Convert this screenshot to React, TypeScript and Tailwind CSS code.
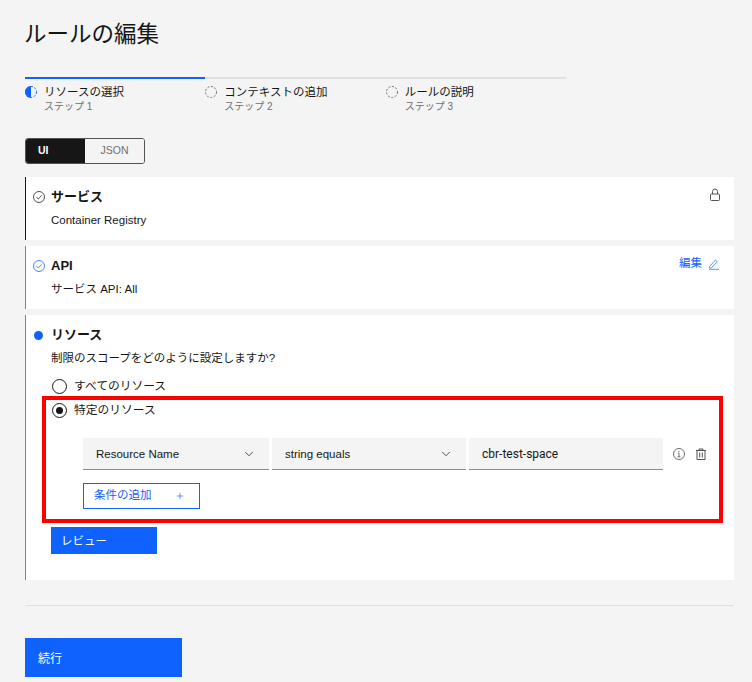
import { ChevronDown, Plus } from "lucide-react";

const FONT = "font-['Liberation_Sans','Noto_Sans_CJK_JP',sans-serif]";

const steps = [
  { label: "リソースの選択", sub: "ステップ 1", active: true },
  { label: "コンテキストの追加", sub: "ステップ 2", active: false },
  { label: "ルールの説明", sub: "ステップ 3", active: false },
];

function StepIcon({ active }: { active: boolean }) {
  if (active) {
    return (
      <svg width="14" height="14" viewBox="0 0 14 14" className="-ml-[1px] shrink-0">
        <path d="M7 1a6 6 0 0 0 0 12z" fill="#0f62fe" />
        <circle cx="7" cy="7" r="5.5" fill="none" stroke="#0f62fe" strokeWidth="1" strokeDasharray="2 1.6" />
      </svg>
    );
  }
  return (
    <svg width="14" height="14" viewBox="0 0 14 14" className="-ml-[1px] shrink-0">
      <circle cx="7" cy="7" r="5.5" fill="none" stroke="#6f6f6f" strokeWidth="1" strokeDasharray="2 1.6" />
    </svg>
  );
}

function CheckCircle({ color }: { color: string }) {
  return (
    <svg width="14" height="14" viewBox="0 0 14 14" className="shrink-0">
      <circle cx="7" cy="7" r="5.5" fill="none" stroke={color} strokeWidth="1" />
      <path d="M4.4 7.2l1.9 1.8 3.3-3.6" fill="none" stroke={color} strokeWidth="1" />
    </svg>
  );
}

function Radio({ checked }: { checked?: boolean }) {
  return (
    <span className="flex h-[15px] w-[15px] shrink-0 items-center justify-center rounded-full border border-[#161616]">
      {checked && <span className="h-[7px] w-[7px] rounded-full bg-[#161616]" />}
    </span>
  );
}

function SelectBox({ label, width }: { label: string; width: string }) {
  return (
    <div className={`flex h-[32px] items-center justify-between border-b border-[#8d8d8d] bg-[#f4f4f4] pl-[13px] pr-[13px] text-[11.5px] text-[#161616] ${width}`}>
      <span className="pt-[2px]">{label}</span>
      <ChevronDown size={14} strokeWidth={1.25} />
    </div>
  );
}

export default function App() {
  return (
    <div className={`${FONT} h-[682px] w-[752px] overflow-hidden bg-[#f4f4f4] text-[#161616]`}>
      <div className="pl-[25px] pr-[18px]">
        <h1 className="-ml-[1px] pt-[20px] text-[22.5px] font-normal leading-[30px]">ルールの編集</h1>

        {/* STEPS */}
        <div className="mt-[27px] flex w-[541px]">
          {steps.map((s) => (
            <div key={s.label} className={`w-1/3 border-t-2 pt-[6px] ${s.active ? "border-[#0f62fe]" : "border-[#e0e0e0]"}`}>
              <div className="flex gap-[6px]">
                <StepIcon active={s.active} />
                <div>
                  <div className="text-[11.5px] leading-[14px]">{s.label}</div>
                  <div className="mt-[1px] text-[10px] leading-[14px] text-[#6f6f6f]">{s.sub}</div>
                </div>
              </div>
            </div>
          ))}
        </div>

        {/* UI / JSON */}
        <div className="mt-[24px] flex h-[26px] w-[120px] overflow-hidden rounded-[3px] border border-[#525252] text-[10.5px]">
          <div className="flex w-[59px] items-center bg-[#161616] pl-[12px] font-semibold text-white">UI</div>
          <div className="flex flex-1 items-center justify-center bg-[#f4f4f4] text-[#6f6f6f]">JSON</div>
        </div>

        {/* SERVICE */}
        <section className="mt-[13px] flex h-[63px] justify-between border-l border-[#161616] bg-white pl-[6px] pr-[13px] pt-[12px]">
          <div>
            <div className="flex items-center gap-[5px]">
              <CheckCircle color="#525252" />
              <h2 className="text-[13px] font-bold leading-[16px]">サービス</h2>
            </div>
            <p className="mt-[7px] pl-[19px] text-[11.5px] leading-[16px]">Container Registry</p>
          </div>
          <svg width="12" height="14" viewBox="0 0 12 14" className="mt-[-1px]">
            <rect x="1.5" y="6" width="9" height="6.5" rx="1" fill="none" stroke="#525252" />
            <path d="M3.5 6V3.5a2.5 2.5 0 0 1 5 0V6" fill="none" stroke="#525252" />
          </svg>
        </section>

        {/* API */}
        <section className="mt-[6px] flex h-[63px] justify-between border-l border-[#4589ff] bg-white pl-[6px] pr-[14px] pt-[12px]">
          <div>
            <div className="flex items-center gap-[5px]">
              <CheckCircle color="#4589ff" />
              <h2 className="text-[13px] font-bold leading-[16px]">API</h2>
            </div>
            <p className="mt-[7px] pl-[19px] text-[11.5px] leading-[16px]">サービス API: All</p>
          </div>
          <div className="-mt-[1px] flex h-[14px] items-center gap-[6px] text-[11.5px] text-[#0f62fe]">
            <span>編集</span>
            <svg width="12" height="12" viewBox="0 0 12 12">
              <path d="M1.5 8.5l6-6.5 1.8 1.7-6 6.3H1.5zM1 11.3h10" fill="none" stroke="#4589ff" strokeWidth="0.9" />
            </svg>
          </div>
        </section>

        {/* RESOURCE */}
        <section className="relative mt-[6px] h-[265px] border-l border-[#4589ff] bg-white pl-[7px] pt-[12px]">
          <div className="flex items-center gap-[6px]">
            <span className="ml-[1px] mr-[2px] h-[9px] w-[9px] rounded-full bg-[#0f62fe]" />
            <h2 className="text-[13px] font-bold leading-[16px]">リソース</h2>
          </div>
          <p className="mt-[7px] pl-[18px] text-[11.5px] leading-[16px]">制限のスコープをどのように設定しますか?</p>

          <div className="mt-[12px] flex items-center gap-[7px] pl-[19px] text-[11.75px] leading-[16px]">
            <Radio />
            <span>すべてのリソース</span>
          </div>
          <div className="mt-[8px] flex items-center gap-[7px] pl-[19px] text-[11.75px] leading-[16px]">
            <Radio checked />
            <span>特定のリソース</span>
          </div>

          <div className="ml-[50px] mt-[20px] flex gap-[3px]">
            <SelectBox label="Resource Name" width="w-[186px]" />
            <SelectBox label="string equals" width="w-[194px]" />
            <div className="flex h-[32px] w-[194px] items-center border-b border-[#8d8d8d] bg-[#f4f4f4] pl-[13px] font-['Roboto',sans-serif] text-[12px]">cbr-test-space</div>
            <div className="ml-[7px] flex items-center gap-[10px]">
              <svg width="12" height="12" viewBox="0 0 12 12">
                <circle cx="6" cy="6" r="5.5" fill="none" stroke="#6f6f6f" />
                <path d="M6 5.2v3.6M4.6 8.8h2.8M5 5.2h1" fill="none" stroke="#6f6f6f" />
                <circle cx="6" cy="3.4" r="0.7" fill="#6f6f6f" />
              </svg>
              <svg width="12" height="12" viewBox="0 0 12 12">
                <path d="M1 2.5h10M4 2.5V1h4v1.5M2 2.5v9h8v-9M4.7 4.5v5M7.3 4.5v5" fill="none" stroke="#525252" />
              </svg>
            </div>
          </div>

          <button className="ml-[50px] mt-[13px] flex h-[26px] w-[117px] items-center justify-between border border-[#0f62fe] pl-[10px] pr-[14px] text-[11.5px] text-[#0f62fe]">
            <span>条件の追加</span>
            <Plus size={10} strokeWidth={1.5} />
          </button>

          <button className="ml-[18px] mt-[18px] flex h-[27px] w-[106px] items-center bg-[#0f62fe] pl-[10px] pt-[2px] text-[11.5px] text-white">レビュー</button>

          {/* red annotation */}
          <div className="absolute left-[16px] top-[81px] h-[127px] w-[681px] border-[4px] border-[#ff0000]" />
        </section>

        <hr className="mt-[25px] border-[#e0e0e0]" />

        <button className="mt-[32px] flex h-[39px] w-[157px] items-center bg-[#0f62fe] pl-[13px] pt-[2px] text-[12px] text-white">続行</button>
      </div>
    </div>
  );
}
